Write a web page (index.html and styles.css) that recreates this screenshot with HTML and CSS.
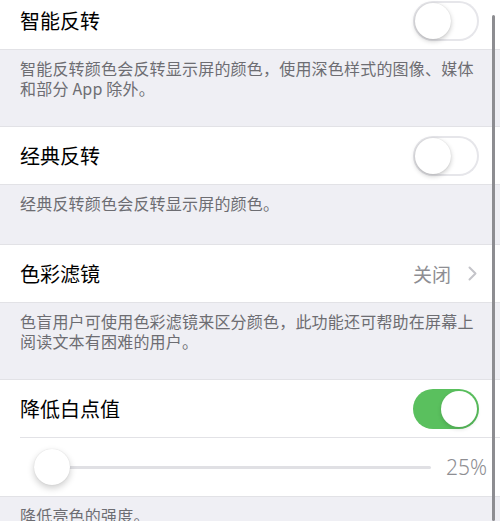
FILE: index.html
```html
<!DOCTYPE html>
<html lang="zh-CN">
  <head>
    <meta charset="UTF-8" />
    <meta name="viewport" content="width=device-width, initial-scale=1.0" />
    <title>显示调节</title>
    <link rel="stylesheet" href="styles.css">
  </head>
  <body>
    <main class="settings">
      <section class="group">
        <div class="row">
          <span class="label">智能反转</span>
          <span class="switch"></span>
        </div>
      </section>
      <p class="note">智能反转颜色会反转显示屏的颜色，使用深色样式的图像、媒体和部分 App 除外。</p>

      <section class="group">
        <div class="row">
          <span class="label">经典反转</span>
          <span class="switch"></span>
        </div>
      </section>
      <p class="note note-short">经典反转颜色会反转显示屏的颜色。</p>

      <section class="group">
        <div class="row">
          <span class="label">色彩滤镜</span>
          <span class="detail">关闭</span>
          <svg class="chevron" width="9" height="15" viewBox="0 0 9 15">
            <polyline points="1.5,1.5 7.5,7.5 1.5,13.5" fill="none" stroke="#c4c4c9" stroke-width="2" stroke-linecap="round" stroke-linejoin="round" />
          </svg>
        </div>
      </section>
      <p class="note">色盲用户可使用色彩滤镜来区分颜色，此功能还可帮助在屏幕上阅读文本有困难的用户。</p>

      <section class="group">
        <div class="row">
          <span class="label">降低白点值</span>
          <span class="switch on"></span>
        </div>
        <div class="row slider-row">
          <div class="slider">
            <span class="thumb"></span>
          </div>
          <span class="value">25%</span>
        </div>
      </section>
      <p class="note">降低亮色的强度。</p>
    </main>

    <!-- scroll indicator -->
    <div class="scroll-bar"></div>
  </body>
</html>
```

FILE: styles.css
```css
body {
  margin: 0;
  background: #efeff4;
  font-family: "Noto Sans CJK SC", "Noto Sans", sans-serif;
  color: #000;
  overflow: hidden;
}

.settings {
  margin-top: -9px;
}

.group {
  background: #fff;
  border-top: 1px solid #e2e2e6;
  border-bottom: 1px solid #e2e2e6;
}

.row {
  height: 57px;
  display: flex;
  align-items: center;
  padding: 0 20px;
}

.label {
  flex: 1;
  font-size: 20px;
}

.detail {
  font-size: 19px;
  color: #8e8e93;
  margin-right: 17px;
}

.chevron {
  margin-right: 3px;
}

/* toggle switch */
.switch {
  position: relative;
  width: 66px;
  height: 40px;
  border-radius: 20px;
  background: #fff;
  box-shadow: inset 0 0 0 2px #e6e6ea;
  margin-right: 1px;
}

.switch::after {
  content: "";
  position: absolute;
  top: 2px;
  left: 2px;
  width: 36px;
  height: 36px;
  border-radius: 50%;
  background: #fff;
  box-shadow: 0 2px 5px rgba(0, 0, 0, 0.22), 0 0 1px rgba(0, 0, 0, 0.15);
}

.switch.on {
  background: #5ac05e;
  box-shadow: none;
}

.switch.on::after {
  left: 28px;
  box-shadow: 0 2px 4px rgba(0, 0, 0, 0.15);
}

/* slider */
.slider-row {
  height: 58px;
  padding: 0 13px 0 0;
  margin-left: 20px;
  border-top: 1px solid #e2e2e6;
}

.slider {
  position: relative;
  flex: 1;
  height: 3px;
  margin: 0 15px 0 14px;
  border-radius: 2px;
  background: #e0e0e4;
}

.thumb {
  position: absolute;
  left: 0;
  top: -17px;
  width: 36px;
  height: 36px;
  border-radius: 50%;
  background: #fff;
  box-shadow: 0 3px 7px rgba(0, 0, 0, 0.2), 0 0 1px rgba(0, 0, 0, 0.15);
}

.value {
  font-family: "Noto Sans", sans-serif;
  font-weight: 300;
  font-size: 21px;
  color: #8e8e93;
}

.note {
  margin: 0;
  padding: 8px 20px 28px;
  font-size: 16px;
  line-height: 20px;
  letter-spacing: 0.2px;
  color: #6d6d72;
}

.note-short {
  padding-bottom: 31px;
}

.scroll-bar {
  position: fixed;
  top: 15px;
  bottom: 0;
  right: 5px;
  width: 3px;
  border-radius: 2px;
  background: #8d8d91;
}
```
